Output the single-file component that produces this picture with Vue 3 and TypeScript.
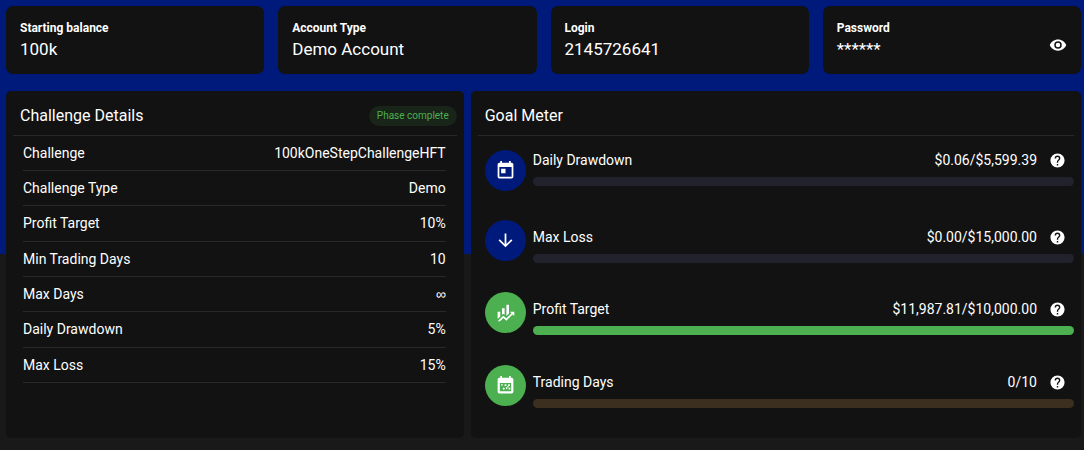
<script setup lang="ts">
import { computed, ref } from 'vue'

interface Detail {
  label: string
  value: string
}

interface Goal {
  name: string
  amount: string
  percent: number
  icon: string
  tone: 'blue' | 'green'
  track: 'slate' | 'amber'
}

const visible = ref(false)
const password = computed(() => (visible.value ? 'secret' : '******'))

const account: Detail[] = [
  { label: 'Starting balance', value: '100k' },
  { label: 'Account Type', value: 'Demo Account' },
  { label: 'Login', value: '2145726641' },
]

const details: Detail[] = [
  { label: 'Challenge', value: '100kOneStepChallengeHFT' },
  { label: 'Challenge Type', value: 'Demo' },
  { label: 'Profit Target', value: '10%' },
  { label: 'Min Trading Days', value: '10' },
  { label: 'Max Days', value: '∞' },
  { label: 'Daily Drawdown', value: '5%' },
  { label: 'Max Loss', value: '15%' },
]

const goals: Goal[] = [
  {
    name: 'Daily Drawdown',
    amount: '$0.06/$5,599.39',
    percent: 0,
    tone: 'blue',
    track: 'slate',
    icon: 'M7,10H12V15H7M19,19H5V8H19M19,3H18V1H16V3H8V1H6V3H5C3.89,3 3,3.9 3,5V19A2,2 0 0,0 5,21H19A2,2 0 0,0 21,19V5A2,2 0 0,0 19,3Z',
  },
  {
    name: 'Max Loss',
    amount: '$0.00/$15,000.00',
    percent: 0,
    tone: 'blue',
    track: 'slate',
    icon: 'M11,4H13V16L18.5,10.5L19.92,11.92L12,19.84L4.08,11.92L5.5,10.5L11,16V4Z',
  },
  {
    name: 'Profit Target',
    amount: '$11,987.81/$10,000.00',
    percent: 100,
    tone: 'green',
    track: 'slate',
    icon: 'M6,16.5L3,19.44V11H6M11,14.66L9.43,13.32L8,14.64V7H11M16,13L13,16V3H16M18.81,12.81L17,11H22V16L20.21,14.21L13,21.36L9.53,18.34L5.75,22H3L9.47,15.66L13,18.64',
  },
  {
    name: 'Trading Days',
    amount: '0/10',
    percent: 0,
    tone: 'green',
    track: 'amber',
    icon: 'M19,3H18V1H16V3H8V1H6V3H5C3.89,3 3,3.9 3,5V19A2,2 0 0,0 5,21H19A2,2 0 0,0 21,19V5A2,2 0 0,0 19,3M18.5,18.5H5.5V9H18.5ZM7,10.5V12H9V10.5ZM11,10.5V12.5H13V10.5ZM15,10.5V12.5H17V10.5ZM9,14.5V16.5H11V14.5ZM12.5,14V16H14V14ZM15.5,14.5V16.5H17.5V14.5ZM14,12.5V14H15.5V12.5Z',
  },
]
</script>

<template>
  <main class="page">
    <section class="cards">
      <article v-for="item in account" :key="item.label" class="card">
        <div>
          <h3 class="card-label">{{ item.label }}</h3>
          <p class="card-value">{{ item.value }}</p>
        </div>
      </article>
      <article class="card">
        <div>
          <h3 class="card-label">Password</h3>
          <p class="card-value">{{ password }}</p>
        </div>
        <button class="icon-button reveal" type="button" aria-label="Show password" @click="visible = !visible">
          <svg class="eye" viewBox="0 0 24 24" aria-hidden="true">
            <path d="M12,9A3,3 0 0,0 9,12A3,3 0 0,0 12,15A3,3 0 0,0 15,12A3,3 0 0,0 12,9M12,17A5,5 0 0,1 7,12A5,5 0 0,1 12,7A5,5 0 0,1 17,12A5,5 0 0,1 12,17M12,4.5C7,4.5 2.73,7.61 1,12C2.73,16.39 7,19.5 12,19.5C17,19.5 21.27,16.39 23,12C21.27,7.61 17,4.5 12,4.5Z" />
          </svg>
        </button>
      </article>
    </section>

    <section class="panels">
      <article class="panel">
        <header class="panel-head">
          <h2 class="panel-title">Challenge Details</h2>
          <span class="chip">Phase complete</span>
        </header>
        <table class="details">
          <tbody>
            <tr v-for="row in details" :key="row.label">
              <th scope="row">{{ row.label }}</th>
              <td :class="{ symbol: row.value === '∞' }">{{ row.value }}</td>
            </tr>
          </tbody>
        </table>
      </article>

      <article class="panel">
        <header class="panel-head">
          <h2 class="panel-title">Goal Meter</h2>
        </header>
        <div class="goals">
          <div v-for="goal in goals" :key="goal.name" class="goal">
            <span class="badge" :class="goal.tone">
              <svg viewBox="0 0 24 24" aria-hidden="true"><path fill-rule="evenodd" :d="goal.icon" /></svg>
            </span>
            <div class="meter">
              <div class="meter-text">
                <span class="meter-name">{{ goal.name }}</span>
                <span class="meter-amount">{{ goal.amount }}</span>
                <button class="icon-button" type="button" :aria-label="'About ' + goal.name">
                  <svg class="help" viewBox="0 0 24 24" aria-hidden="true">
                    <path d="M15.07,11.25L14.17,12.17C13.45,12.89 13,13.5 13,15H11V14.5C11,13.39 11.45,12.39 12.17,11.67L13.41,10.41C13.78,10.05 14,9.55 14,9C14,7.89 13.1,7 12,7A2,2 0 0,0 10,9H8A4,4 0 0,1 12,5A4,4 0 0,1 16,9C16,9.88 15.64,10.67 15.07,11.25M13,19H11V17H13M12,2A10,10 0 0,0 2,12A10,10 0 0,0 12,22A10,10 0 0,0 22,12C22,6.47 17.5,2 12,2Z" />
                  </svg>
                </button>
              </div>
              <div
                class="track"
                :class="goal.track"
                role="progressbar"
                :aria-label="goal.name"
                :aria-valuenow="goal.percent"
              >
                <div class="fill" :style="{ width: goal.percent + '%' }"></div>
              </div>
            </div>
          </div>
        </div>
      </article>
    </section>
  </main>
</template>

<style>
body {
  margin: 0;
  background: #191919;
}
</style>

<style scoped>
.page {
  box-sizing: border-box;
  min-height: 100vh;
  padding: 6px 3px 12px 6px;
  background: linear-gradient(#001a7b, #001a7b) top / 100% 254px no-repeat #191919;
  color: #fff;
  font-family: Roboto, "Liberation Sans", sans-serif;
  font-size: 14px;
}

h2,
h3,
p {
  margin: 0;
}

svg {
  display: block;
  fill: currentColor;
}

.cards {
  display: grid;
  grid-template-columns: repeat(4, 1fr);
  gap: 14px;
}

.card {
  display: flex;
  align-items: center;
  justify-content: space-between;
  padding: 12px 14px 14px;
  border-radius: 7px;
  background: #121212;
}

.card-label {
  font-size: 12px;
  font-weight: 700;
  line-height: 20px;
}

.card-value {
  font-size: 17px;
  line-height: 22px;
}

.icon-button {
  padding: 0;
  border: 0;
  background: none;
  color: #fff;
  cursor: pointer;
}

.reveal {
  align-self: flex-end;
  padding-bottom: 6px;
}

.eye {
  width: 18px;
  height: 18px;
}

.panels {
  display: grid;
  grid-template-columns: 3fr 4fr;
  gap: 7px;
  margin-top: 17px;
}

.panel {
  padding: 0 7px;
  border-radius: 5px;
  background: #121212;
}

.panel-head {
  display: flex;
  align-items: center;
  justify-content: space-between;
  height: 44px;
  padding-left: 7px;
  border-bottom: 1px solid #292929;
}

.panel-title {
  padding-top: 6px;
  font-size: 16px;
  font-weight: 400;
  line-height: 24px;
}

.chip {
  margin-top: 6px;
  padding: 0 8px;
  border-radius: 10px;
  background: #182518;
  color: #4caf50;
  font-size: 10px;
  line-height: 20px;
}

.details {
  width: calc(100% - 21px);
  height: 247px;
  margin: 0 11px 0 10px;
  border-collapse: collapse;
}

.details th,
.details td {
  padding: 0;
  border-bottom: 1px solid #292929;
  font-weight: 400;
  text-align: left;
}

.details td {
  text-align: right;
}

.details .symbol {
  font-family: "Liberation Sans", sans-serif;
}

.goals {
  display: grid;
  grid-template-rows: 70px 72px 73px 72px;
  padding: 14px 0 1px 7px;
}

.goal {
  display: flex;
  align-items: flex-start;
  gap: 7px;
}

.goal + .goal .meter {
  padding-top: 7px;
}

.badge {
  display: grid;
  flex: none;
  place-items: center;
  width: 41px;
  height: 41px;
  border-radius: 50%;
}

.badge svg {
  width: 21px;
  height: 21px;
}

.blue {
  background: #001a7b;
}

.green,
.fill {
  background: #4caf50;
}

.meter {
  flex: 1;
}

.meter-text {
  display: flex;
  align-items: center;
  padding-right: 8px;
  line-height: 20px;
}

.meter-name {
  flex: 1;
}

.meter-amount {
  margin-right: 12px;
}

.help {
  width: 17px;
  height: 17px;
}

.track {
  height: 9px;
  margin-top: 7px;
  border-radius: 5px;
  overflow: hidden;
}

.slate {
  background: #22222d;
}

.amber {
  background: #3d2f1f;
}

.fill {
  height: 100%;
}
</style>
